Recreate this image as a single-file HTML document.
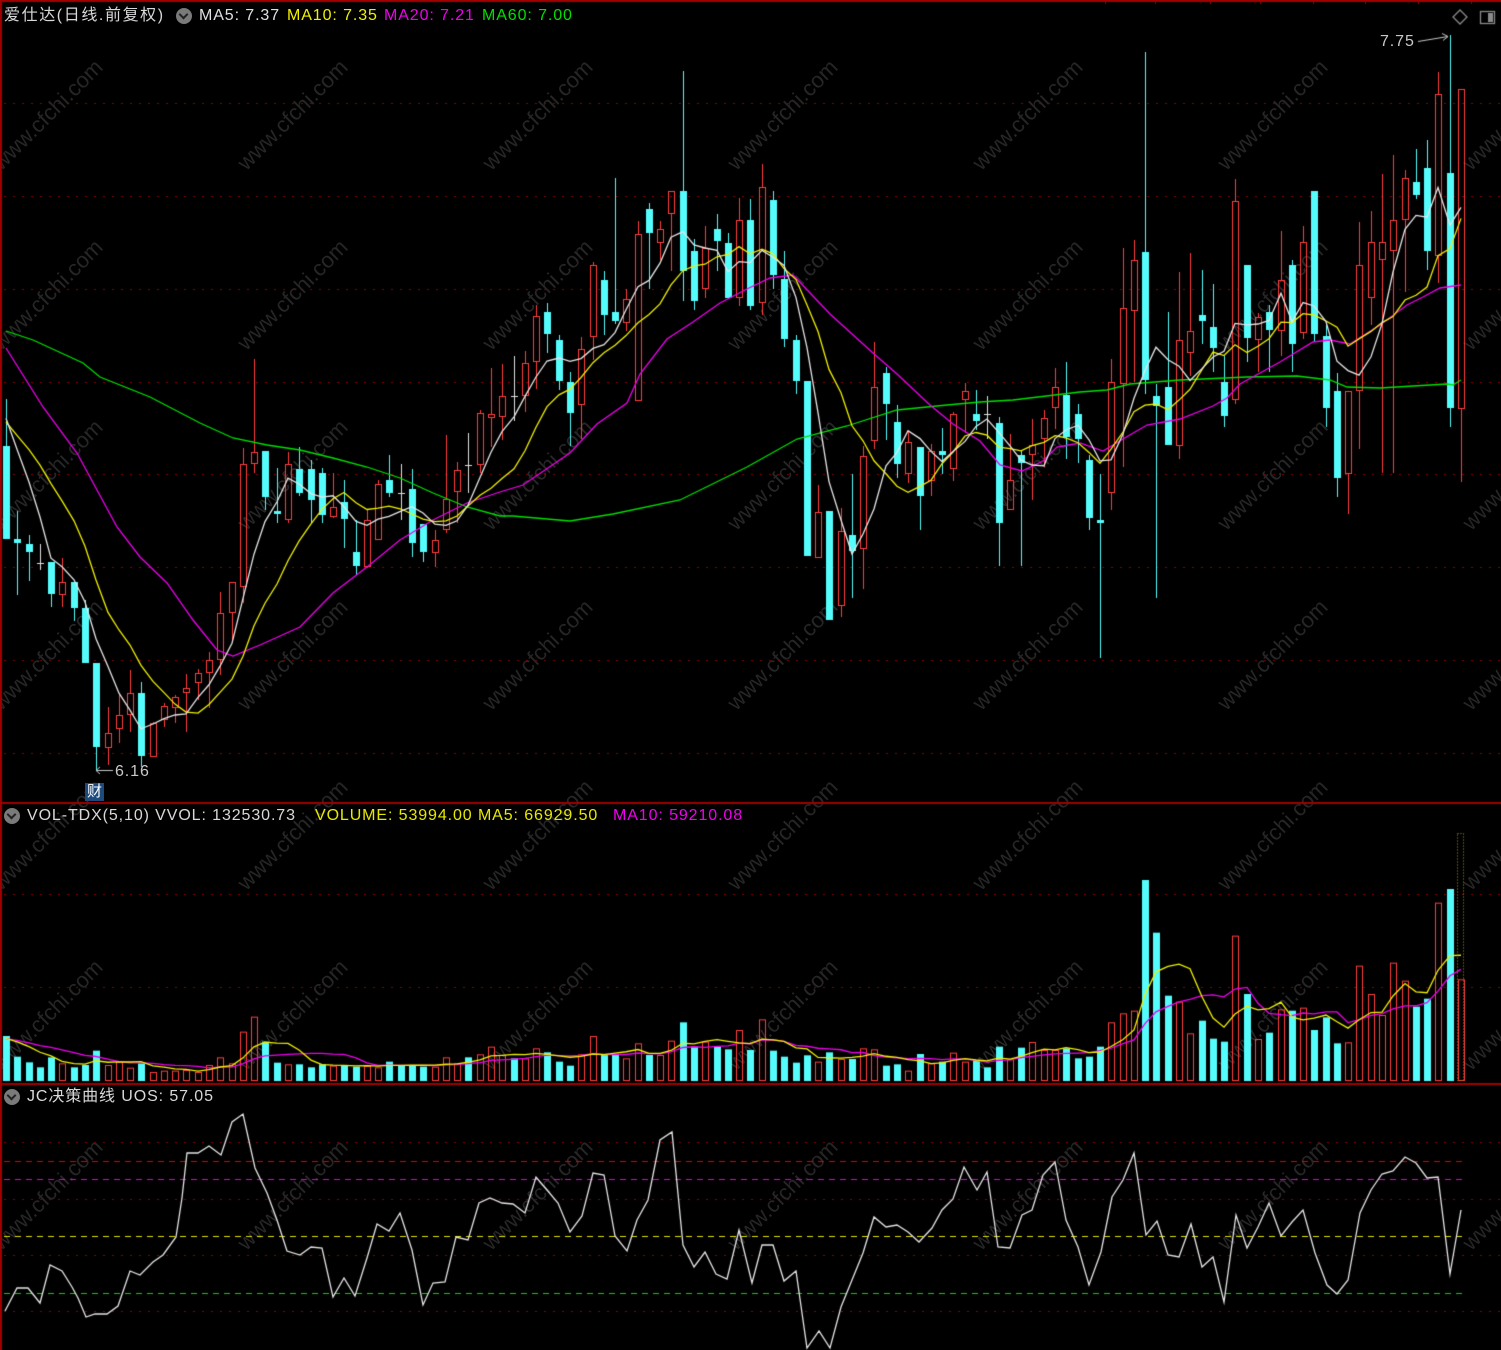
<!DOCTYPE html>
<html><head><meta charset="utf-8">
<style>
html,body{margin:0;padding:0;background:#000;overflow:hidden;}
#wrap{position:relative;width:1501px;height:1350px;overflow:hidden;background:#000;font-family:"Liberation Sans","Noto Sans CJK SC",sans-serif;}
canvas{position:absolute;left:0;top:0;}
.t{position:absolute;font-size:16px;letter-spacing:0.9px;white-space:nowrap;line-height:18px;}
.wm{position:absolute;color:#262626;font-size:22px;white-space:nowrap;transform:rotate(-45deg);transform-origin:center;font-family:"Liberation Sans",sans-serif;}
.ic{position:absolute;width:16px;height:16px;border-radius:50%;background:#7a7a7a;}
.ic:after{content:"";position:absolute;left:4px;top:3px;width:5px;height:5px;border-right:2px solid #222;border-bottom:2px solid #222;transform:rotate(45deg);}
</style></head><body><div id="wrap">
<div id="wms"></div>
<canvas id="c" width="1501" height="1350"></canvas>
<div class="t" style="left:4px;top:7px;color:#d8d8d8;letter-spacing:1.6px;">爱仕达(日线.前复权)</div>
<div class="ic" style="left:176px;top:8px;"></div>
<div class="t" style="left:199px;top:7px;color:#e0e0e0;">MA5: 7.37</div>
<div class="t" style="left:287px;top:7px;color:#f0f000;">MA10: 7.35</div>
<div class="t" style="left:384px;top:7px;color:#f000f0;">MA20: 7.21</div>
<div class="t" style="left:482px;top:7px;color:#00e000;">MA60: 7.00</div>
<div class="t" style="left:1380px;top:33px;color:#c8c8c8;">7.75</div>
<div class="t" style="left:115px;top:763px;color:#c8c8c8;">6.16</div>
<div style="position:absolute;left:85px;top:783px;width:19px;height:18px;background:#1d4a7c;color:#fff;font-size:15px;line-height:18px;text-align:center;font-family:'Liberation Sans','Noto Sans CJK SC',sans-serif;">财</div>
<div class="ic" style="left:4px;top:808px;"></div>
<div class="t" style="left:27px;top:807px;color:#d8d8d8;">VOL-TDX(5,10) VVOL: 132530.73</div>
<div class="t" style="left:315px;top:807px;color:#e8e800;">VOLUME: 53994.00 MA5: 66929.50</div>
<div class="t" style="left:613px;top:807px;color:#f000f0;">MA10: 59210.08</div>
<div class="ic" style="left:4px;top:1089px;"></div>
<div class="t" style="left:27px;top:1088px;color:#d8d8d8;">JC决策曲线 UOS: 57.05</div>
</div>
<script>
(function(){var h='';for(var cx=55;cx<1560;cx+=245){for(var cy=115;cy<1300;cy+=180){h+='<div class="wm" style="left:'+(cx-80)+'px;top:'+(cy-13)+'px;">www.cfchi.com</div>';}}document.getElementById('wms').innerHTML=h;})();
var cv=document.getElementById('c'),g=cv.getContext('2d');
var RED='#ff3c3c',CY='#54fcfc';
function hline(y,x0,x1,col,dash){g.save();g.strokeStyle=col;g.lineWidth=1;g.setLineDash(dash);g.beginPath();g.moveTo(x0,y+0.5);g.lineTo(x1,y+0.5);g.stroke();g.restore();}
g.fillStyle='#a00000';g.fillRect(0,0,1501,2);g.fillRect(0,2,2,1348);
g.fillRect(0,802,1501,2);g.fillRect(0,1083,1501,2);
[1105,1155,1210,1260,1313,1365,1418,1471].forEach(function(x){g.fillRect(x,0,1,4);});
[103,196,289,382,474,567,660,753].forEach(function(y){hline(y,4,1501,'#8a0000',[2,7]);});
[894,987].forEach(function(y){hline(y,4,1501,'#8a0000',[2,7]);});
[1142,1199,1255,1311].forEach(function(y){hline(y,4,1501,'#8a0000',[2,7]);});
hline(1161,4,1463,'#e00000',[6,5]);hline(1179,4,1463,'#e000e0',[6,5]);
hline(1236,4,1463,'#e0e000',[6,5]);hline(1293,4,1463,'#00d800',[6,5]);
var C=[
['c',446,539,399,539],['c',539,543,511,595],['c',544,552,535,581],['w',563,563,544,570],['c',562,594,562,607],
['r',582,595,558,607],['c',582,608,582,621],['c',608,663,600,663],['c',663,747,663,770],['r',733,748,707,765],
['r',715,729,695,743],['r',693,715,670,732],['c',693,756,682,767],['r',723,757,722,757],['r',706,720,703,727],
['r',697,708,695,723],['r',688,693,674,732],['r',673,683,669,700],['r',660,673,652,708],['r',613,660,592,675],
['r',582,613,582,640],['r',464,587,448,603],['r',452,464,359,473],['c',451,497,451,510],['c',511,514,468,523],
['r',464,520,452,523],['c',469,493,447,496],['c',469,500,460,523],['c',473,515,468,523],['r',507,517,473,518],
['c',502,519,480,548],['c',552,566,520,575],['r',520,567,510,568],['r',484,540,480,540],['c',480,493,455,497],
['w',493,493,464,520],['c',489,543,469,557],['c',524,552,524,562],['r',540,553,530,567],['r',499,530,435,533],
['r',470,492,462,523],['w',465,465,433,493],['r',413,465,410,473],['r',414,418,368,447],
['r',396,417,364,440],['w',396,396,356,421],['r',363,396,351,412],['r',316,362,305,389],['c',312,334,303,353],
['c',340,381,335,390],['c',382,413,372,446],['r',349,405,337,439],['r',265,337,262,360],['c',280,315,271,335],
['c',312,321,178,324],['r',299,323,289,331],['r',234,401,221,401],['c',209,233,203,289],['r',229,243,221,260],
['r',191,214,191,271],['c',191,271,71,301],['c',251,301,239,310],['r',248,289,226,298],['c',229,241,214,271],
['c',243,298,233,298],['r',220,298,198,306],['c',220,306,199,310],['r',187,303,164,315],['c',200,275,191,289],
['c',279,339,251,347],['c',340,381,335,394],['c',381,556,381,556],['r',512,558,485,558],['c',511,620,511,620],
['r',531,606,508,617],['c',535,551,474,598],['r',456,549,446,589],['r',387,441,342,449],['c',373,404,367,440],
['c',422,464,405,478],['r',442,474,431,483],['c',447,496,447,530],['r',451,481,444,496],['c',451,455,428,474],
['r',414,469,412,481],['r',391,400,383,433],['c',414,421,390,430],
['w',414,414,396,439],['c',423,523,417,566],['r',480,510,434,510],['c',455,463,451,566],['r',445,455,419,500],
['r',418,439,410,467],['r',387,408,368,429],['c',395,437,362,459],['c',414,439,404,463],['c',460,518,455,530],
['c',520,523,474,658],['r',382,493,359,510],['r',308,384,248,467],['r',260,311,240,382],['c',252,380,52,394],
['c',396,406,384,598],['c',387,445,312,445],['r',340,446,272,459],['r',331,353,253,376],['c',315,321,270,344],
['c',327,348,284,372],['c',382,416,356,427],['r',201,400,179,404],['c',265,338,265,362],['r',317,340,313,372],
['c',312,330,305,372],['r',280,331,231,356],['c',265,344,260,372],['r',242,333,226,339],['c',191,334,191,342],
['c',336,408,325,427],['c',391,478,373,497],['r',391,474,391,514],['r',265,391,222,449],['r',242,298,211,325],
['r',242,260,174,473],['r',220,251,155,473],['r',178,220,170,292],['c',182,195,149,199],['c',168,251,140,270],
['r',94,256,72,283],['c',173,408,35,427],['r',89,409,89,482]
];
function X(i){return Math.round(6+i*11.279);}
g.lineWidth=1;
C.forEach(function(d,i){var cx=X(i),t=d[0],bt=d[1],bb=d[2],wt=d[3],wb=d[4];
 if(t=='c'){g.fillStyle=CY;g.fillRect(cx,wt,1,wb-wt);g.fillRect(cx-3,bt,7,Math.max(1,bb-bt));}
 else if(t=='w'){g.fillStyle='#e0e0e0';g.fillRect(cx,wt,1,wb-wt);g.fillRect(cx-3,bt,7,1);}
 else{g.fillStyle=RED;g.strokeStyle=RED;if(bt>wt)g.fillRect(cx,wt,1,bt-wt);if(wb>bb)g.fillRect(cx,bb,1,wb-bb);
  if(bb-bt<2)g.fillRect(cx-3,bt,7,Math.max(1,bb-bt));else g.strokeRect(cx-3+0.5,bt+0.5,6,bb-bt-1);}
});
function poly(pts,col){g.save();g.strokeStyle=col;g.lineWidth=1.3;g.beginPath();pts.forEach(function(p,k){if(k)g.lineTo(p[0],p[1]);else g.moveTo(p[0],p[1]);});g.stroke();g.restore();}
var cl=C.map(function(d){return d[0]=='c'?d[2]:d[1];});
function ma(arr,n,pad){var out=[];for(var i=0;i<arr.length;i++){var s=0;for(var k=i-n+1;k<=i;k++)s+=(k<0?pad:arr[k]);out.push([X(i),s/n]);}return out;}
poly([[6,331],[33,340],[83,363],[100,377],[150,397],[200,423],[233,438],[267,445],[300,450],[333,458],[367,467],[400,478],[433,493],[467,507],[500,516],[513,516],[570,521],[613,514],[680,500],[747,467],[797,439],[847,426],[897,410],[947,405],[980,402],[1013,400],[1080,392],[1107,390],[1130,384],[1180,380],[1247,377],[1297,376],[1330,380],[1347,387],[1380,388],[1447,384],[1453,385],[1461,380]],'#00e000');
poly([[6,348],[43,407],[77,453],[117,527],[140,557],[167,583],[193,620],[217,650],[233,656],[260,645],[300,627],[333,593],[367,567],[400,540],[433,520],[467,503],[500,492],[523,485],[570,453],[597,424],[627,403],[640,374],[667,339],[693,322],[720,303],[747,289],[770,278],[793,275],[830,314],[873,353],[897,374],[930,405],[953,424],[980,441],[1000,465],[1022,471],[1043,461],[1057,447],[1080,443],[1103,451],[1123,439],[1147,425],[1180,419],[1213,406],[1227,398],[1240,384],[1280,362],[1313,342],[1330,340],[1350,344],[1380,325],[1407,305],[1423,297],[1440,288],[1461,285]],'#f000f0');
poly(ma(cl,10,409),'#f0f000');
poly(ma(cl,5,388),'#e6e6e6');
g.strokeStyle='#c8c8c8';g.lineWidth=1;
g.beginPath();g.moveTo(1418,41.5);g.lineTo(1448,36.5);g.moveTo(1442,33.5);g.lineTo(1448,36.5);g.lineTo(1443,40.5);g.stroke();
g.beginPath();g.moveTo(96,770.5);g.lineTo(113,770.5);g.moveTo(100,767);g.lineTo(96,770.5);g.lineTo(100,774);g.stroke();
g.strokeStyle='#8a8a8a';g.lineWidth=1.3;g.beginPath();g.moveTo(1460,10);g.lineTo(1467,17);g.lineTo(1460,24);g.lineTo(1453,17);g.closePath();g.stroke();
g.strokeRect(1480.5,11.5,14,12);g.fillStyle='#8a8a8a';g.fillRect(1488,13,5,9);
var V=[648,710,727,742,712,730,742,735,692,735,725,743,730,756,752,752,750,756,735,712,730,635,590,665,728,733,733,742,733,737,735,740,738,742,725,735,737,740,740,712,730,712,703,680,705,715,715,685,697,725,737,703,648,705,705,715,670,705,705,662,607,680,665,680,688,630,
690,598,692,710,728,706,725,697,717,717,685,688,737,733,752,702,730,725,698,725,722,742,680,718,683,666,690,690,685,715,710,680,607,580,572,180,338,527,545,640,602,656,665,347,522,657,638,568,572,563,630,592,670,667,437,522,585,428,482,560,536,248,207,478];
var BASE=1081;var vt=V.map(function(z){return 820+z/3;});
vt.forEach(function(t,i){var cx=X(i),d=C[i]||['c'];var h=BASE-t;
 if(d[0]=='r'){g.strokeStyle=RED;g.lineWidth=1;g.strokeRect(cx-3+0.5,t+0.5,6,h-1);}
 else{g.fillStyle=CY;g.fillRect(cx-3,t,7,h);}
});
poly(ma(vt,10,vt[0]+3),'#f000f0');
poly(ma(vt,5,vt[0]+3),'#f0f000');
g.save();g.strokeStyle='#a0a000';g.setLineDash([1,2]);g.strokeRect(1457.5,833.5,6,247);g.restore();
poly([[5,1311],[17,1288],[28,1288],[40,1303],[50,1265],[62,1271],[72,1287],[78,1298],[86,1317],[95,1314],[107,1314],[118,1306],[130,1271],[140,1275],[153,1262],[163,1255],[176,1237],[182,1198],[187,1153],[198,1153],[209,1146],[221,1155],[232,1122],[243,1114],[255,1168],[267,1193],[277,1220],[287,1251],[300,1255],[311,1247],[322,1248],[333,1297],[344,1278],[355,1296],[367,1258],[377,1224],[389,1231],[400,1213],[412,1250],[423,1305],[433,1283],[445,1282],[456,1237],[468,1240],[479,1203],[490,1198],[502,1203],[513,1204],[525,1213],[536,1177],[547,1190],[558,1203],[570,1232],[582,1216],[593,1173],[604,1175],[615,1236],[627,1251],[637,1220],[648,1200],[660,1140],[672,1132],[683,1245],[694,1267],[705,1252],[716,1274],[727,1279],[739,1230],[752,1283],[762,1245],[773,1245],[784,1281],[796,1271],[807,1348],[819,1331],[830,1348],[841,1307],[852,1280],[863,1253],[874,1217],[886,1227],[897,1225],[908,1232],[919,1242],[932,1228],[942,1210],[953,1199],[964,1167],[977,1190],[987,1172],[998,1247],[1010,1248],[1022,1215],[1032,1210],[1043,1175],[1055,1162],[1066,1220],[1078,1247],[1089,1285],[1101,1252],[1112,1197],[1123,1180],[1134,1153],[1146,1235],[1157,1221],[1168,1255],[1179,1257],[1191,1224],[1202,1267],[1213,1257],[1224,1302],[1236,1215],[1247,1248],[1258,1227],[1269,1203],[1281,1236],[1292,1222],[1303,1210],[1315,1253],[1327,1285],[1337,1294],[1348,1280],[1360,1213],[1371,1190],[1382,1174],[1393,1171],[1405,1157],[1416,1163],[1427,1178],[1438,1177],[1450,1274],[1461,1210]],'#e6e6e6');
</script>
</body></html>
